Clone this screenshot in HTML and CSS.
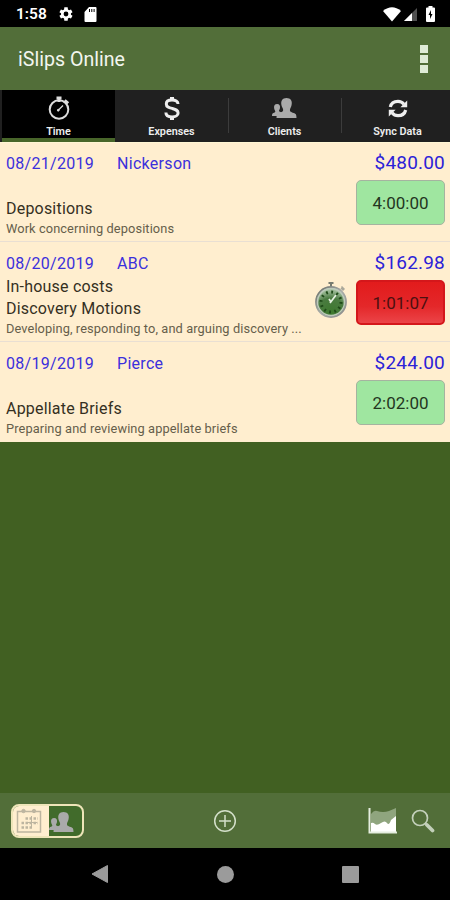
FILE: index.html
```html
<!DOCTYPE html>
<html lang="en">
<head>
    <meta charset="UTF-8">
    <meta name="viewport" content="width=device-width, initial-scale=1.0">
    <title>iSlips Online</title>
    <link rel="stylesheet" href="styles.css">
</head>
<body>
    <svg class="defs">
        <symbol id="people" viewBox="0 0 25 22">
            <path d="M5 7c2.600 0 3.500 2 2.900 4.400-.3 1.200-1 1.700-.9 2.500.1.700 1.800 1 2.400 1.500L8 19H0c0-2.600.6-3 2.600-3.600 1-.4.800-1.300.2-2.200C1.500 10.500 1.800 7 5 7z"/>
            <path d="M14.500 1c4 0 5.800 2.800 5.200 6.300-.3 2.600-1.300 3.600-1.700 5.200-.4 2.300 1.400 2.700 3.700 3.400 2.300.8 2.800 1.700 2.800 5.100h-20c0-3 .5-4.200 2.900-5.100 2.100-.8 4.100-1.100 3.700-3.400-.3-1.600-1.500-2.500-1.800-5.200C8.900 3.800 10.500 1 14.500 1z"/>
        </symbol>
    </svg>

    <div class="status-bar">
        <span class="clock">1:58</span>
        <svg class="gear" width="16" height="16" viewBox="0 0 24 24"><path fill="#fff" fill-rule="evenodd" d="M19.400 13c.1-.6.1-1.400 0-2l2.400-1.800-2.300-4-2.800 1.200-1.800-1L14.500 2h-5l-.4 3.300-1.800 1-2.900-1.100-2.300 4L4.600 11c-.1.700-.1 1.300 0 2l-2.500 1.800 2.300 4 2.900-1.100 1.800 1 .4 3.300h5l.4-3.300 1.800-1 2.800 1.100 2.300-4zM12 15.600a3.600 3.600 0 1 1 0-7.200 3.600 3.600 0 0 1 0 7.200z"/></svg>
        <svg width="13" height="15" viewBox="0 0 13 15"><path fill="#fff" fill-rule="evenodd" d="M5 0h6.500q1 0 1 1v13q0 1-1 1h-10q-1 0-1-1V5zM5 2v3h1V2zM7.300 2v3h1V2zM9.600 2v3h1V2z"/></svg>
        <div class="status-right">
            <svg width="18" height="15" viewBox="0 0 18 15"><path fill="#fff" d="M0 4Q9-3.500 18 4L9 14.500z"/></svg>
            <svg width="15" height="15" viewBox="0 0 15 15"><path fill="#505050" d="M14 1v13H1z"/><path fill="#fff" d="M9 6v8H1z"/></svg>
            <svg class="battery" width="9" height="16" viewBox="0 0 9 16"><path fill="#fff" d="M2.500 0h4v1.500H8q1 0 1 1V15q0 1-1 1H1q-1 0-1-1V2.500q0-1 1-1h1.500z"/><path d="M5 4L2.500 9H4v4l2.500-5H5z"/></svg>
        </div>
    </div>

    <div class="app-bar">
        <span>iSlips Online</span>
        <div class="menu"><i></i><i></i><i></i></div>
    </div>

    <div class="tabs">
        <div class="tab active">
            <svg width="24" height="26" viewBox="0 0 24 26" fill="none" stroke="#ddd"><circle cx="12" cy="14.500" r="9.300" stroke-width="2"/><path d="M9.500 3h5M12 3v4" stroke-width="3"/><path d="M17.500 5.500l3.500 3" stroke-width="3.500"/><path d="M10.500 16L16 10.500" stroke-width="1.300"/><circle cx="11.300" cy="15.200" r=".9" fill="#ddd"/></svg>
            <span>Time</span>
        </div>
        <div class="tab">
            <svg width="20" height="26" viewBox="0 0 20 26" fill="none" stroke="#eee"><path d="M16 9C16 6.400 13.500 5 10 5S4.300 6.500 4.300 8.900c0 3.100 2.700 3.700 5.900 4.500 3.600 1 5.900 1.600 5.900 4.500 0 2.500-2.600 4-6 4-3.700 0-6.200-1.600-6.200-4.400" stroke-width="3"/><path d="M10 2v3M10 22v3" stroke-width="4"/></svg>
            <span>Expenses</span>
        </div>
        <div class="tab">
            <svg class="clients" width="25" height="22" fill="#aaa"><use href="#people"/></svg>
            <span>Clients</span>
        </div>
        <div class="tab">
            <svg width="22" height="26" viewBox="0 0 22 26" fill="none" stroke="#eee" stroke-width="3.200"><path d="M3.300 12C4.200 8 7.200 6.300 11 6.300c2.500 0 4.500 1 6 2.900M18.700 15c-1 4-4 5.700-7.700 5.700-2.500 0-4.500-1-6-2.900"/><path d="M20.200 5.500v6.800h-6.800zM1.800 21.500v-6.800h6.800z" fill="#eee" stroke="none"/></svg>
            <span>Sync Data</span>
        </div>
    </div>

    <div class="list">
        <div class="slip">
            <div class="info">
                <div class="head"><span class="date">08/21/2019</span><span>Nickerson</span></div>
                <div class="extra"></div>
                <div class="activity">Depositions</div>
                <div class="note">Work concerning depositions</div>
            </div>
            <div class="side">
                <div class="amount">$480.00</div>
                <div class="timer">4:00:00</div>
            </div>
        </div>
        <div class="slip">
            <div class="info">
                <div class="head"><span class="date">08/20/2019</span><span>ABC</span></div>
                <div class="extra">In-house costs</div>
                <div class="activity">Discovery Motions</div>
                <div class="note">Developing, responding to, and arguing discovery ...</div>
            </div>
            <svg class="stopwatch" width="34" height="40" viewBox="0 0 34 40">
                <defs>
                    <radialGradient id="face" cx=".5" cy=".85" r=".8"><stop offset="0" stop-color="#3d792e"/><stop offset=".6" stop-color="#4a7b40"/><stop offset="1" stop-color="#b5cdb0"/></radialGradient>
                    <linearGradient id="rim" x2="1" y2="1"><stop offset="0" stop-color="#666b66"/><stop offset=".5" stop-color="#a9aca9"/><stop offset="1" stop-color="#888"/></linearGradient>
                </defs>
                <path d="M14.500 3h5M17 3v5" stroke="#777b70" stroke-width="2"/>
                <path d="M27 8l2.500 2.500M27.500 6.500l3 3" stroke="#aaa89a" stroke-width="1.500"/>
                <circle cx="17" cy="22" r="15" fill="url(#face)" stroke="url(#rim)" stroke-width="1.800"/>
                <circle cx="17" cy="22" r="13.500" fill="none" stroke="#bdc9ba" stroke-width="1.500"/>
                <circle cx="17" cy="22" r="10" fill="none" stroke="#1f4a18" stroke-width="3" stroke-dasharray="1.800 3.430"/>
                <path d="M16 23L22 15M17 22l-2-3" stroke="#e6f1e2" stroke-width="1.700"/>
            </svg>
            <div class="side">
                <div class="amount">$162.98</div>
                <div class="timer running">1:01:07</div>
            </div>
        </div>
        <div class="slip">
            <div class="info">
                <div class="head"><span class="date">08/19/2019</span><span>Pierce</span></div>
                <div class="extra"></div>
                <div class="activity">Appellate Briefs</div>
                <div class="note">Preparing and reviewing appellate briefs</div>
            </div>
            <div class="side">
                <div class="amount">$244.00</div>
                <div class="timer">2:02:00</div>
            </div>
        </div>
    </div>

    <div class="toolbar">
        <div class="toggle">
            <div class="by-date">
                <svg width="26" height="26" viewBox="0 0 26 26" fill="none" stroke="#bdb5a0"><path d="M1.500 3.500h23v20.500h-23z" stroke-width="1.500"/><circle cx="7.500" cy="3" r="1.700" fill="#bdb5a0"/><circle cx="18" cy="3" r="1.700" fill="#bdb5a0"/><path d="M9.500 10.500H22M5.500 15H22M5.500 19.500H17" stroke-width="2.500" stroke-dasharray="2.500 1.500"/><path d="M15.500 8v11M10 14.500h11"/></svg>
            </div>
            <div class="by-client">
                <svg width="25" height="22" fill="#aaa"><use href="#people"/></svg>
            </div>
        </div>
        <svg class="add" width="24" height="24" viewBox="0 0 24 24" fill="none" stroke="#d3dfc9" stroke-width="1.500"><circle cx="12" cy="12" r="10.300"/><path d="M12 6v12M6 12h12"/></svg>
        <div class="tools">
            <svg width="29" height="27" viewBox="0 0 29 27"><path fill="#8fa57e" d="M3 7q3-4 6-3t6 1 6-1l7-3v20H3z"/><path fill="#fff" d="M3 16q2-1 4 1t6-1 6 0 4-3l5-4v16H3z"/><path d="M1.500 1v24.500H29" fill="none" stroke="#e5ede0" stroke-width="2"/></svg>
            <svg width="24" height="24" viewBox="0 0 24 24" fill="none" stroke="#c3d0ba"><circle cx="9" cy="9" r="7.500" stroke-width="1.700"/><path d="M14 14l2.500 2.500" stroke-width="2"/><path d="M16 16l5.500 5.500" stroke-width="3.700" stroke-linecap="round"/></svg>
        </div>
    </div>

    <div class="nav-bar">
        <svg width="18" height="20" viewBox="0 0 18 20"><path d="M16.500 1.500v17L1 10z" fill="#9b9b9b" stroke="#9b9b9b" stroke-linejoin="round"/></svg>
        <div class="home"></div>
        <div class="recent"></div>
    </div>
</body>
</html>
```

FILE: styles.css
```css
body {
    font-family: Roboto, sans-serif;
    margin: 0;
    height: 900px;
    display: flex;
    flex-direction: column;
    background-color: #416022;
    overflow: hidden;
}

svg {
    display: block;
    flex-shrink: 0;
}

.defs {
    display: none;
}

.status-bar {
    height: 27px;
    background-color: #000;
    color: #fff;
    display: flex;
    align-items: center;
    padding: 1px 15px 0 16px;
    box-sizing: border-box;
}

.clock {
    font-size: 15.5px;
    font-weight: 600;
    width: 42px;
}

.gear {
    margin-right: 10px;
}

.status-right {
    display: flex;
    align-items: center;
    margin-left: auto;
    gap: 2px;
}

.battery {
    margin-left: 6px;
}

.app-bar {
    height: 63px;
    background-color: #526e39;
    color: #f3f6ef;
    display: flex;
    align-items: center;
    justify-content: space-between;
    padding: 2px 22px 0 18px;
    box-sizing: border-box;
    font-size: 19.6px;
}

.menu i {
    display: block;
    width: 8px;
    height: 8px;
    margin-bottom: 2px;
    background-color: #dfebd7;
}

.menu {
    padding-bottom: 2px;
}

.menu i:last-child {
    margin-bottom: 0;
}

.tabs {
    height: 52px;
    display: grid;
    grid-template-columns: repeat(4, 113px);
    background-color: #202020;
    padding-left: 2px;
    box-sizing: border-box;
    overflow: hidden;
}

.tab {
    position: relative;
    display: flex;
    flex-direction: column;
    align-items: center;
    padding-top: 5px;
    color: #eee;
    font-size: 10.8px;
    line-height: 13px;
    font-weight: 600;
}

.tab span {
    margin-top: 4px;
}

.tab .clients {
    margin: 2px 0;
}

.tab + .tab + .tab::before {
    content: "";
    position: absolute;
    left: 0;
    top: 8px;
    width: 1px;
    height: 35px;
    background-color: #3c3c3c;
}

.active {
    background: linear-gradient(#48662a, #48662a) bottom / 100% 4px no-repeat #000;
}

.list {
    border-top: 1px solid #fff6d4;
}

.slip {
    height: 100px;
    box-sizing: border-box;
    border-bottom: 1px solid #e9dfd3;
    background-color: #ffeecf;
    display: flex;
    padding: 9px 5px 0 6px;
}

.slip:first-child {
    height: 99px;
    padding-top: 8px;
}

.slip:last-child {
    border-bottom-color: #ffeecf;
}

.info {
    flex: 1;
    min-width: 0;
    color: #35301f;
    white-space: nowrap;
}

.head {
    display: flex;
    color: #3b30dc;
    font-size: 16px;
    line-height: 24px;
    letter-spacing: 0.3px;
    padding-top: 1px;
}

.date {
    width: 111px;
}

.extra,
.activity {
    height: 22px;
    line-height: 22px;
    font-size: 16px;
    letter-spacing: 0.2px;
}

.note {
    font-size: 12.8px;
    line-height: 18px;
    letter-spacing: 0.1px;
    color: #665e4b;
}

.stopwatch {
    margin: 29px 8px 0 0;
}

.side {
    width: 89px;
}

.amount {
    font-size: 19px;
    line-height: 22px;
    padding-top: 1px;
    letter-spacing: 0.2px;
    text-align: right;
    color: #2c22d8;
    white-space: nowrap;
}

.timer {
    height: 45px;
    margin-top: 6px;
    box-sizing: border-box;
    border: 1px solid #a5b4a0;
    border-radius: 5px;
    background-color: #9fe6a0;
    color: #24361f;
    font-size: 17px;
    line-height: 44px;
    text-align: center;
}

.running {
    background: linear-gradient(#e21b1c, #e4282a 60%, #ec4448);
    border: 2px solid #d4171b;
    line-height: 42px;
    color: #4c1010;
}

.toolbar {
    height: 55px;
    margin-top: auto;
    background-color: #526e39;
    display: grid;
    grid-template-columns: 1fr auto 1fr;
    align-items: center;
    padding: 0 15px 0 11px;
}

.add {
    margin-left: 4px;
}

.toggle {
    width: 73px;
    height: 34px;
    box-sizing: border-box;
    border: 2px solid #eee5b9;
    border-radius: 8px;
    background-color: #416b2b;
    display: flex;
    overflow: hidden;
}

.by-date {
    width: 32px;
    padding-right: 4px;
    background-color: #ffeecf;
    display: flex;
    align-items: center;
    justify-content: center;
}

.by-client {
    display: flex;
    align-items: center;
    padding-top: 2px;
}

.tools {
    display: flex;
    align-items: center;
    justify-content: flex-end;
    gap: 14px;
}

.nav-bar {
    height: 52px;
    background-color: #000;
    display: flex;
    align-items: center;
    justify-content: space-between;
    padding: 0 91px;
}

.home {
    width: 17px;
    height: 17px;
    border-radius: 50%;
    background-color: #9b9b9b;
}

.recent {
    width: 17px;
    height: 17px;
    border-radius: 1px;
    background-color: #9b9b9b;
}
```
